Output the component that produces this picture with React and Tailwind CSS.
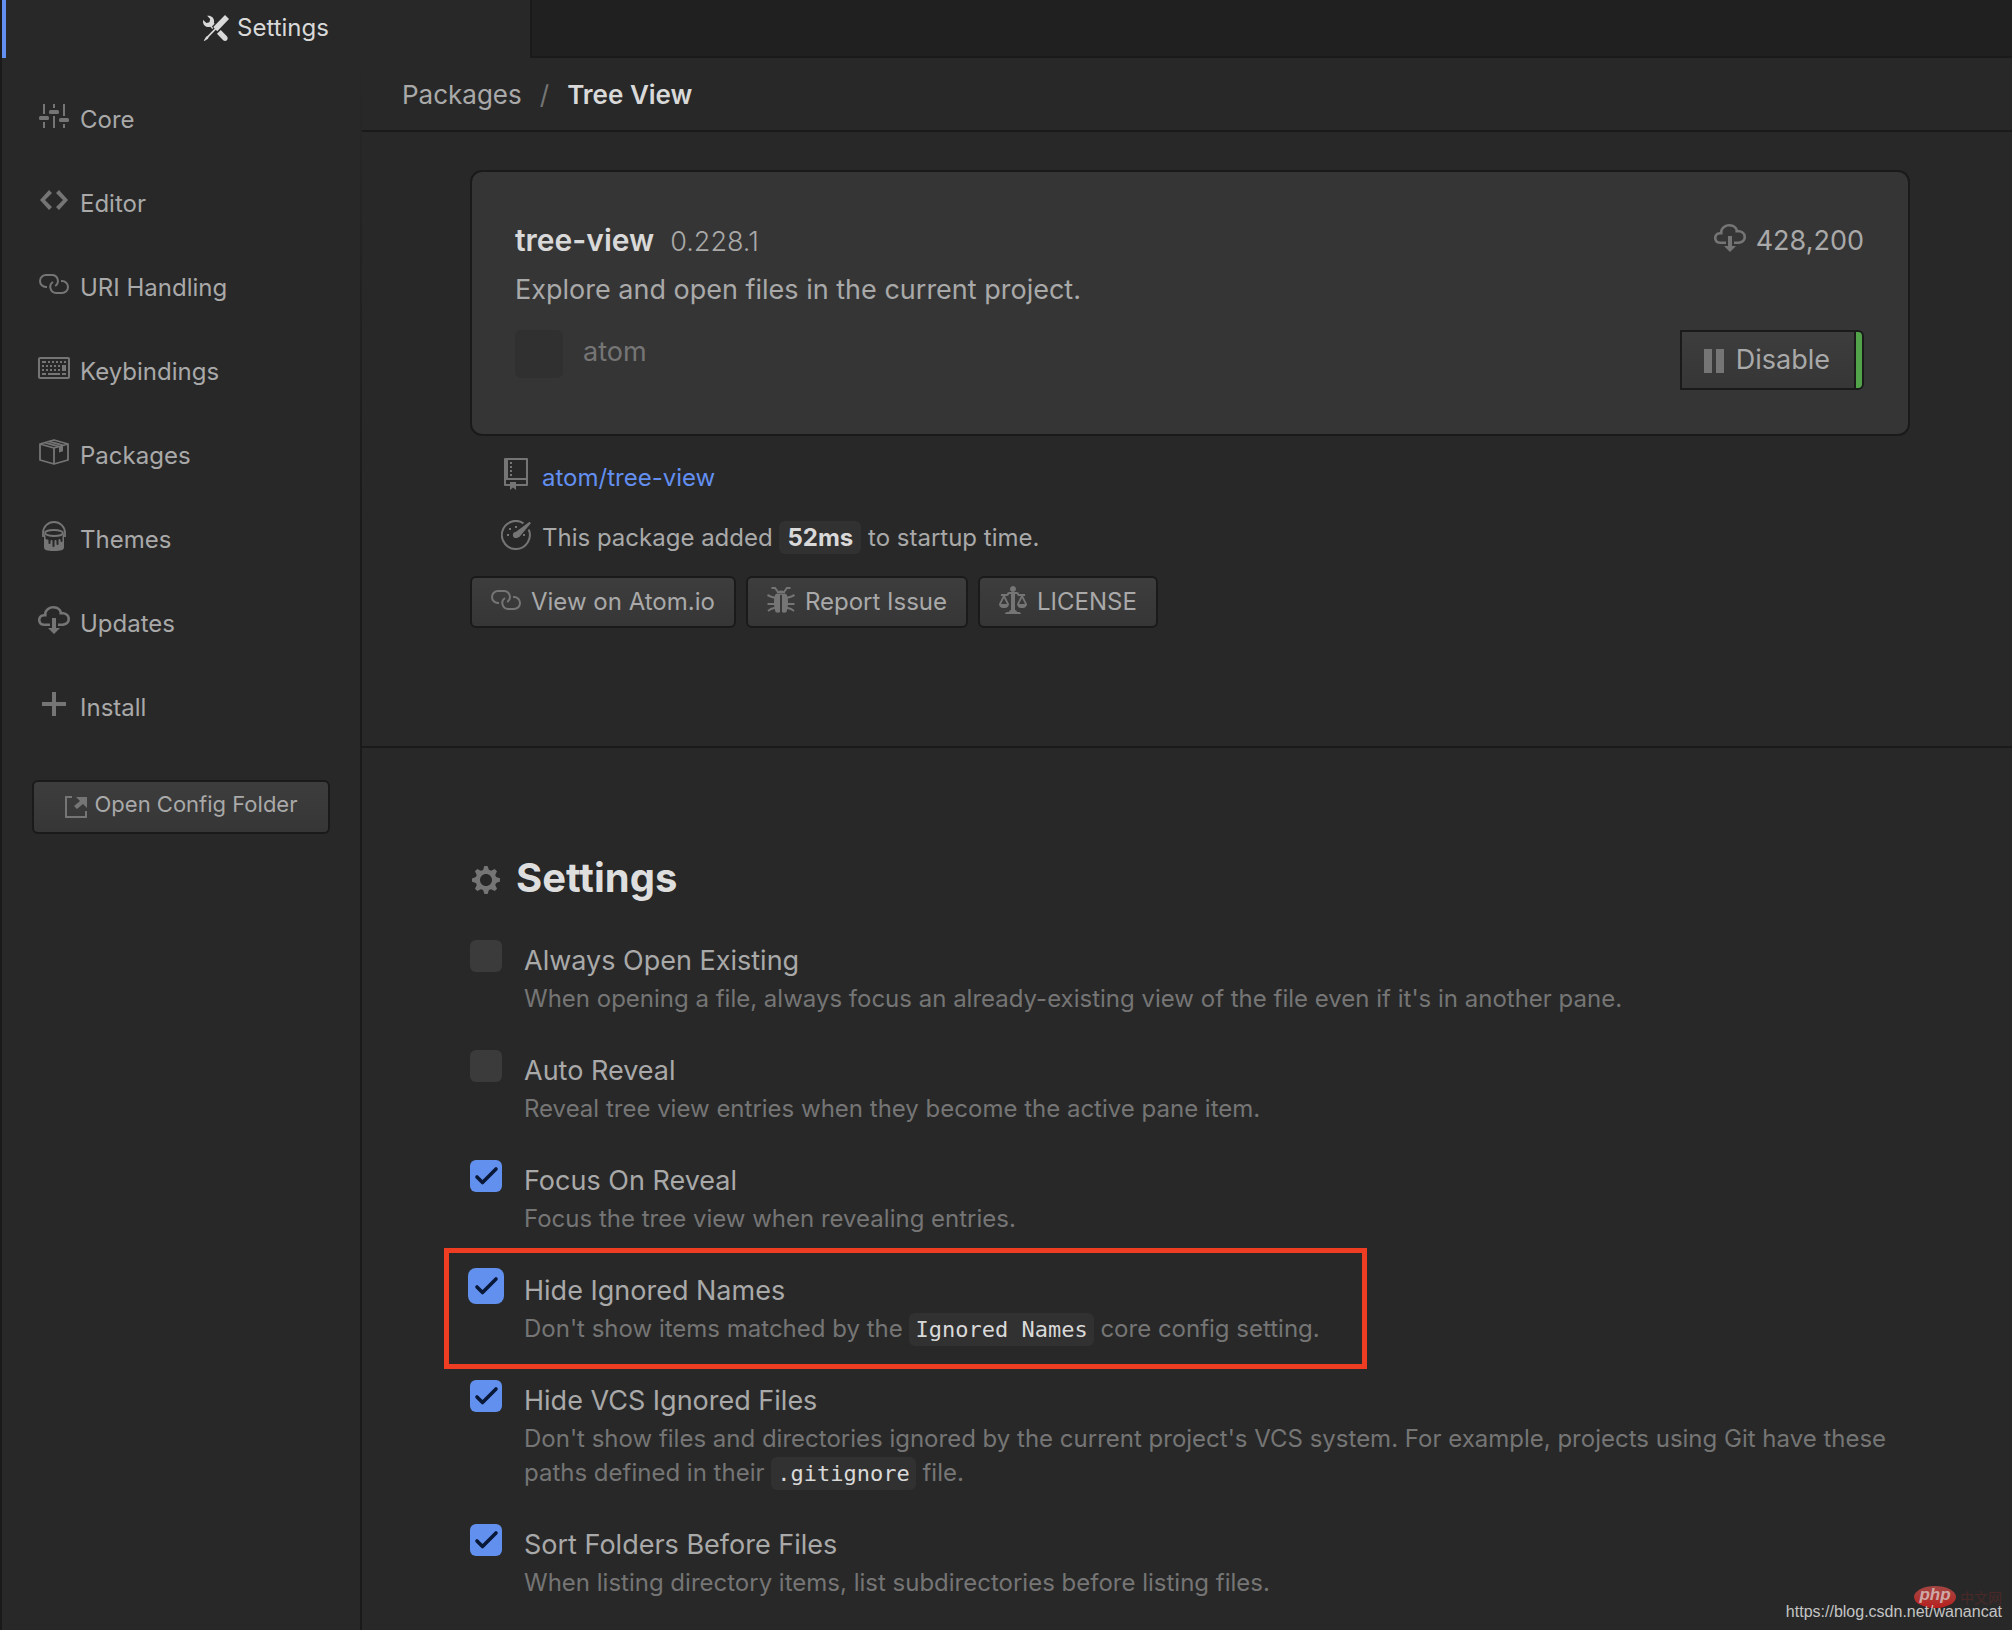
import React from "react";

/* ---------- icons ---------- */

const ToolsIcon = () => (
  <svg viewBox="0 0 16 16" className="size-[26px] shrink-0 fill-current" aria-hidden="true">
    <path d="M4.48 7.27c.26.26 1.28 1.33 1.28 1.33l.56-.58-.88-.91 1.69-1.8s-.76-.74-.43-.45c.32-1.19.03-2.51-.87-3.44C4.93.5 3.66.2 2.52.51l1.93 2-.51 1.96-1.89.52-1.93-1.99C-.19 4.17.1 5.48 1 6.4c.94.98 2.29 1.26 3.48.87zm6.44 1.94l-2.33 2.3 3.84 3.98c.31.33.73.49 1.14.49.41 0 .82-.16 1.14-.49.63-.65.63-1.7 0-2.35l-3.79-3.93zM16 2.53L13.55 0 6.33 7.46l.88.91-4.31 4.46-.99.53-1.39 2.27.35.37 2.2-1.44.51-1.02L7.9 9.08l.88.91L16 2.53z" />
  </svg>
);

const SlidersIcon = () => (
  <svg width="30" height="24" viewBox="0 0 30 24" fill="currentColor" aria-hidden="true">
    <path d="M4 0h2v10H4zM4 18h2v6H4zM14 0h2v4h-2zM14 12h2v12h-2zM24 0h2v12h-2zM24 20h2v4h-2z" />
    <rect x="0" y="12" width="10" height="4" rx="1.5" />
    <rect x="10" y="6" width="10" height="4" rx="1.5" />
    <rect x="20" y="14" width="10" height="4" rx="1.5" />
  </svg>
);

const CodeIcon = () => (
  <svg width="28" height="20" viewBox="0 3 14 10" fill="currentColor" aria-hidden="true">
    <path d="M9.5 3L8 4.5 11.5 8 8 11.5 9.5 13 14 8 9.5 3zm-5 0L0 8l4.5 5L6 11.5 2.5 8 6 4.5 4.5 3z" />
  </svg>
);

const LinkIcon = () => (
  <svg width="30" height="20" viewBox="0 0 30 20" fill="none" stroke="currentColor" strokeWidth="2" aria-hidden="true">
    <path d="M8 13H7A6 6 0 0 1 7 1h6a6 6 0 0 1 3.2 11" />
    <path d="M14 8a6 6 0 0 0 3 11h6a6 6 0 0 0 0-12h-1" />
  </svg>
);

const KeyboardIcon = () => (
  <svg width="32" height="22" viewBox="0 0 32 22" aria-hidden="true">
    <rect x="1" y="1" width="30" height="20" rx="1" fill="none" stroke="currentColor" strokeWidth="2" />
    <path
      fill="currentColor"
      d="M4 4h4v2H4zM10 4h2v2h-2zM14 4h2v2h-2zM18 4h2v2h-2zM22 4h2v2h-2zM26 4h2v2h-2zM4 8h2v2H4zM8 8h2v2H8zM12 8h2v2h-2zM16 8h2v2h-2zM20 8h2v2h-2zM24 8h4v6h-4zM4 12h2v2H4zM8 12h2v2H8zM12 12h2v2h-2zM16 12h2v2h-2zM20 12h2v2h-2zM4 16h4v2H4zM10 16h12v2H10zM24 16h4v2h-4z"
    />
  </svg>
);

const PackageIcon = () => (
  <svg width="30" height="26" viewBox="0 0 30 26" fill="none" stroke="currentColor" strokeWidth="1.8" strokeLinejoin="round" aria-hidden="true">
    <path d="M1 5l14-4 14 4v16l-14 4-14-4zM1 5l14 4 14-4M15 9v16M6 3.6l14 4M10 2.4l14 4" />
    <path d="M20 7.6l4-1.2v5.8l-4 1.3z" fill="currentColor" stroke="none" />
  </svg>
);

const PaintcanIcon = () => (
  <svg width="24" height="30" viewBox="0 0 24 30" aria-hidden="true">
    <path d="M1 16v-4a11 11 0 0 1 22 0v4" fill="none" stroke="currentColor" strokeWidth="1.8" />
    <ellipse cx="12" cy="12" rx="9" ry="3" fill="none" stroke="currentColor" strokeWidth="1.8" />
    <path
      fill="currentColor"
      d="M2 12v14.500c0 2.500 3 3.500 10 3.500s10-1 10-3.500V12l-1.500 3v5a1 1 0 0 1-2 0v-1a1 1 0 0 0-2 0v4a1 1 0 0 1-2 0v-3a1 1 0 0 0-2 0v5a1 1 0 0 1-2 0v-5a1 1 0 0 0-2 0v2a1 1 0 0 1-2 0v-2.500a1 1 0 0 0-1-1c-1 0-2-.5-2-1.500V15z"
    />
  </svg>
);

const CloudDownloadIcon = () => (
  <svg width="32" height="28" viewBox="0 1 16 14" fill="currentColor" aria-hidden="true">
    <path d="M9 12h2l-3 3-3-3h2V7h2v5zm3-8c0-.44-.91-3-4.5-3C5.08 1 3 2.920 3 5 1.020 5 0 6.520 0 8c0 1.530 1 3 3 3h3V9.700H3C1.380 9.700 1.300 8.280 1.300 8c0-.17.05-1.700 1.700-1.700h1.300V5c0-1.390 1.560-2.700 3.200-2.700 2.550 0 3.130 1.550 3.200 1.800v1.200H12c.81 0 2.700.22 2.700 2.200 0 2.090-2.250 2.200-2.700 2.200h-2V11h2c2.080 0 4-1.160 4-3.500C16 5.060 14.080 4 12 4z" />
  </svg>
);

const PlusIcon = () => (
  <svg width="24" height="24" viewBox="0 0 24 24" fill="currentColor" aria-hidden="true">
    <path d="M10 0h4v10h10v4H14v10h-4V14H0v-4h10z" />
  </svg>
);

const ExternalIcon = () => (
  <svg width="22" height="22" viewBox="0 0 22 22" aria-hidden="true">
    <path d="M7 1H1v20h20v-6" fill="none" stroke="currentColor" strokeWidth="2" />
    <path d="M11 1h11v11l-4-4-6 5-3-3 6-5z" fill="currentColor" />
  </svg>
);

const RepoIcon = () => (
  <svg width="24" height="32" viewBox="0 0 24 32" fill="currentColor" aria-hidden="true">
    <path
      fillRule="evenodd"
      d="M1 0h22a1 1 0 0 1 1 1v26a1 1 0 0 1-1 1H12v4l-3-2.500L6 32v-4H1a1 1 0 0 1-1-1V1a1 1 0 0 1 1-1zM4 2v18h18V2zM2 22v4h4v-2h6v2h10v-4z"
    />
    <path d="M6 4h2v2H6zM6 8h2v2H6zM6 12h2v2H6zM6 16h2v2H6z" />
  </svg>
);

const DashboardIcon = () => (
  <svg width="30" height="30" viewBox="0 0 30 30" fill="currentColor" aria-hidden="true">
    <path d="M22.500 3.300A14 14 0 1 0 27.700 9.500" fill="none" stroke="currentColor" strokeWidth="2" />
    <path d="M12.600 13.500L28.500 1.800l1.400 1.400-11.700 14z" />
    <circle cx="15" cy="15" r="3.100" />
    <path d="M6 14h2v2H6zM8 8h2v2H8zM14 6h2v2h-2zM22 14h2v2h-2z" />
  </svg>
);

const BugIcon = () => (
  <svg width="28" height="26" viewBox="0 0 28 26" fill="none" stroke="currentColor" strokeWidth="2" aria-hidden="true">
    <path d="M4.500 1H8l3 4M23.500 1H20l-3 4M.5 8l3 1.500 5 1.500M.5 17h8M1 24l3-2 5-1.500M27.500 8l-3 1.500-5 1.500M27.500 17h-8M27 24l-3-2-5-1.500" />
    <path d="M9.500 6.500c.5-2 2-3 4.500-3s4 1 4.500 3z" fill="currentColor" stroke="none" />
    <path d="M13 8v17c-1 1-3 1-4.500 0C7.500 22 7 18 7 15c0-4 .5-7 2-8h10c1.500 1 2 4 2 8 0 3-.5 7-1.500 10-1.500 1-3.500 1-4.500 0V8z" fill="currentColor" stroke="none" />
  </svg>
);

const LawIcon = () => (
  <svg width="28" height="28" viewBox="0 1 14 14" fill="currentColor" aria-hidden="true">
    <path
      fillRule="evenodd"
      d="M7 4c-.83 0-1.500-.67-1.500-1.500S6.170 1 7 1s1.500.67 1.500 1.500S7.830 4 7 4zm7 6c0 1.110-.89 2-2 2h-1c-1.110 0-2-.89-2-2l2-4h-1c-.55 0-1-.45-1-1H8v8c.42 0 1 .45 1 1h1c.42 0 1 .45 1 1H3c0-.55.58-1 1-1h1c0-.55.58-1 1-1V5H5c0 .55-.45 1-1 1H3l2 4c0 1.110-.89 2-2 2H2c-1.110 0-2-.89-2-2l2-4H1V5h3c0-.55.45-1 1-1h4c.55 0 1 .45 1 1h3v1h-1l2 4zM2.500 7L1 10h3L2.500 7zM13 10l-1.500-3-1.500 3h3z"
    />
  </svg>
);

const GearIcon = () => (
  <svg width="28" height="28" viewBox="0 1 14 14" fill="currentColor" aria-hidden="true">
    <path
      fillRule="evenodd"
      d="M14 8.770v-1.600l-1.940-.64-.45-1.090.88-1.840-1.130-1.130-1.810.91-1.090-.45-.69-1.920h-1.600l-.63 1.940-1.110.45-1.840-.88-1.130 1.130.91 1.810-.45 1.090L0 7.230v1.590l1.940.64.45 1.090-.88 1.840 1.130 1.130 1.810-.91 1.090.45.69 1.920h1.590l.63-1.940 1.110-.45 1.840.88 1.130-1.130-.92-1.810.47-1.090L14 8.750v.02zM7 11c-1.660 0-3-1.340-3-3s1.340-3 3-3 3 1.340 3 3-1.340 3-3 3z"
    />
  </svg>
);

const PauseIcon = () => (
  <svg width="20" height="24" viewBox="0 0 20 24" fill="currentColor" aria-hidden="true">
    <path d="M0 0h8v24H0zM12 0h8v24h-8z" />
  </svg>
);

/* ---------- building blocks ---------- */

const NAV = [
  ["Core", SlidersIcon],
  ["Editor", CodeIcon],
  ["URI Handling", LinkIcon],
  ["Keybindings", KeyboardIcon],
  ["Packages", PackageIcon],
  ["Themes", PaintcanIcon],
  ["Updates", CloudDownloadIcon],
  ["Install", PlusIcon],
];

const Code = ({ children }) => (
  <code className="rounded-md bg-[#313131] px-1.5 py-1 font-['DejaVu_Sans_Mono',monospace] text-[22px] leading-none text-[#d9d9d9]">
    {children}
  </code>
);

const ActionButton = ({ icon: Icon, children }) => (
  <button
    type="button"
    className="flex h-13 items-center gap-2.5 rounded-md border-2 border-[#1a1a1a] bg-linear-to-b from-[#3d3d3d] to-[#363636] px-[19px] text-[24px] whitespace-nowrap"
  >
    <span className="mb-1 text-[#757575]">
      <Icon />
    </span>
    {children}
  </button>
);

const Option = ({ id, title, checked = false, focused = false, highlighted = false, children }) => (
  <div className="relative grid grid-cols-[32px_1fr] gap-x-[22px]">
    {highlighted && (
      <div className="pointer-events-none absolute -top-[22px] -left-[26px] h-[121px] w-[923px] border-[5px] border-[#ee3d23]" />
    )}
    <div className="grid size-8 place-content-center place-items-center">
      <input
        id={id}
        type="checkbox"
        defaultChecked={checked}
        className={
          focused
            ? "peer col-start-1 row-start-1 size-9 appearance-none rounded-lg bg-[#3b3b3b] checked:bg-[#6290ee]"
            : "peer col-start-1 row-start-1 size-8 appearance-none rounded-md bg-[#3b3b3b] checked:bg-[#6290ee]"
        }
      />
      <svg
        viewBox="0 0 32 32"
        className="pointer-events-none col-start-1 row-start-1 hidden size-8 fill-none stroke-[#0a1838] peer-checked:block"
        strokeWidth="3.6"
        strokeLinecap="round"
        strokeLinejoin="round"
        aria-hidden="true"
      >
        <path d="M7 17l5.500 5.500L26 9" />
      </svg>
    </div>
    <div>
      <label htmlFor={id} className="block text-[27px] leading-[42px]">
        {title}
      </label>
      <p className="text-[24px] leading-[34px] text-[#757575]">{children}</p>
    </div>
  </div>
);

export default function App() {
  return (
    <div className="relative flex min-h-screen flex-col border-l-2 border-[#1a1a1a] bg-[#282828] font-['Inter',sans-serif] text-[#a9a9a9]">
      <header className="flex h-[58px]">
        <div className="flex w-[528px] items-center justify-center gap-2 border-l-4 border-[#638ff0] pr-1 pb-0.5 text-[24px] text-[#d9d9d9]">
          <ToolsIcon />
          Settings
        </div>
        <div className="flex-1 border-b-2 border-l-2 border-[#1a1a1a] bg-[#202020]" />
      </header>

      <div className="flex flex-1">
        <aside className="w-[358px] shrink-0 pt-[19px]">
          <nav>
            {NAV.map(([label, Icon]) => (
              <a key={label} href="#" className="flex h-21 items-center gap-2.5 pl-9 text-[24px]">
                <span className="mb-1.5 flex w-8 justify-center text-[#757575]">
                  <Icon />
                </span>
                <span className="pt-0.5">{label}</span>
              </a>
            ))}
          </nav>
          <div className="px-[30px] pt-[31px]">
            <button
              type="button"
              className="flex h-[54px] w-full items-center justify-center gap-2 rounded-md border-2 border-[#1a1a1a] bg-linear-to-b from-[#3d3d3d] to-[#363636] text-[22px]"
            >
              <span className="text-[#757575]">
                <ExternalIcon />
              </span>
              <span className="pb-1.5">Open Config Folder</span>
            </button>
          </div>
        </aside>
        <div className="w-0.5 shrink-0 bg-linear-to-b from-[#282828] to-[#1a1a1a] to-30%" />

        <main className="min-w-0 flex-1">
          <nav className="flex h-[74px] items-center border-b-2 border-[#1a1a1a] pl-10 text-[26px]">
            <a href="#">Packages</a>
            <span className="px-[18px] text-[#757575]">/</span>
            <span className="font-semibold text-[#d9d9d9]">Tree View</span>
          </nav>

          <section className="border-b-2 border-[#1a1a1a] pt-[38px] pr-[102px] pb-[118px] pl-[108px]">
            <div className="flex h-[266px] justify-between rounded-xl border-2 border-[#1a1a1a] bg-[#353535] pt-[45px] pr-11 pl-[43px]">
              <div>
                <h1 className="flex items-baseline gap-4 leading-[46px]">
                  <span className="text-[30px] font-semibold text-[#d9d9d9]">tree-view</span>
                  <span className="text-[27px] font-light">0.228.1</span>
                </h1>
                <p className="text-[27px] leading-[50px]">Explore and open files in the current project.</p>
                <div className="flex gap-5 pt-[15px]">
                  <div className="size-12 rounded-md bg-[#303030]" />
                  <a href="#" className="text-[27px] leading-11 text-[#757575]">atom</a>
                </div>
              </div>
              <div className="flex flex-col items-end gap-[65px]">
                <div className="flex items-center gap-2.5 text-[27px] leading-12">
                  <span className="mb-1.5 text-[#757575]">
                    <CloudDownloadIcon />
                  </span>
                  428,200
                </div>
                <div className="flex h-15 rounded-r-md border-2 border-[#1a1a1a] bg-[#53a34b]">
                  <button
                    type="button"
                    className="mr-1.5 flex items-center gap-3 border-r-2 border-[#1a1a1a] bg-linear-to-b from-[#3d3d3d] to-[#363636] pr-6 pl-[22px] text-[27px]"
                  >
                    <span className="pt-0.5 text-[#757575]">
                      <PauseIcon />
                    </span>
                    Disable
                  </button>
                </div>
              </div>
            </div>

            <div className="flex items-center gap-2.5 pt-5 pl-[30px] text-[24px] leading-11">
              <span className="flex w-8 justify-center pb-2 text-[#757575]">
                <RepoIcon />
              </span>
              <a href="#" className="text-[#638ff0]">atom/tree-view</a>
            </div>
            <div className="flex items-center gap-2.5 pt-4 pl-[30px] text-[24px] leading-11">
              <span className="flex w-8 justify-center pb-1.5 text-[#757575]">
                <DashboardIcon />
              </span>
              <p>
                This package added{" "}
                <strong className="rounded-md bg-[#313131] px-2 py-0.5 font-bold text-[#d9d9d9]">52ms</strong> to startup
                time.
              </p>
            </div>
            <div className="flex gap-2.5 pt-4">
              <ActionButton icon={LinkIcon}>View on Atom.io</ActionButton>
              <ActionButton icon={BugIcon}>Report Issue</ActionButton>
              <ActionButton icon={LawIcon}>LICENSE</ActionButton>
            </div>
          </section>

          <section className="pt-[102px] pr-[102px] pb-6 pl-[108px]">
            <h2 className="flex items-center gap-4 pl-0.5 text-[40px] leading-[56px] font-bold text-[#dedede]">
              <span className="pt-1 text-[#757575]">
                <GearIcon />
              </span>
              Settings
            </h2>
            <div className="flex flex-col gap-[34px] pt-[34px]">
              <Option id="alwaysOpenExisting" title="Always Open Existing">
                When opening a file, always focus an already-existing view of the file even if it's in another pane.
              </Option>
              <Option id="autoReveal" title="Auto Reveal">
                Reveal tree view entries when they become the active pane item.
              </Option>
              <Option id="focusOnReveal" title="Focus On Reveal" checked>
                Focus the tree view when revealing entries.
              </Option>
              <Option id="hideIgnoredNames" title="Hide Ignored Names" checked focused highlighted>
                Don't show items matched by the <Code>Ignored Names</Code> core config setting.
              </Option>
              <Option id="hideVcsIgnoredFiles" title="Hide VCS Ignored Files" checked>
                Don't show files and directories ignored by the current project's VCS system. For example, projects using
                Git have these paths defined in their <Code>.gitignore</Code> file.
              </Option>
              <Option id="sortFoldersBeforeFiles" title="Sort Folders Before Files" checked>
                When listing directory items, list subdirectories before listing files.
              </Option>
            </div>
          </section>
        </main>
      </div>

      <div className="pointer-events-none absolute right-2.5 bottom-2 flex flex-col items-end">
        <div className="flex items-center gap-1">
          <span className="flex h-[22px] w-[42px] items-center justify-center rounded-[50%] bg-linear-to-b from-[#a34543] to-[#b81d1d] pb-1 font-['Liberation_Sans',sans-serif] text-[17px] font-bold text-[#cfa8a6] italic">
            php
          </span>
          <span className="font-['Noto_Sans_CJK_SC',sans-serif] text-[14px] leading-5 text-[#4a2828]">中文网</span>
        </div>
        <span className="-mt-1.5 font-['Liberation_Sans',sans-serif] text-[16px] leading-5 text-[#c4c4c4]">
          https://blog.csdn.net/wanancat
        </span>
      </div>
    </div>
  );
}
